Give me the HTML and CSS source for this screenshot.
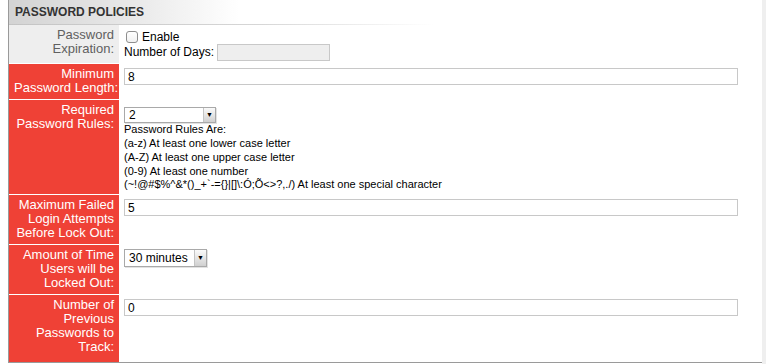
FILE: index.html
```html
<!DOCTYPE html>
<html lang="en">
<head>
    <meta charset="UTF-8">
    <meta name="viewport" content="width=device-width, initial-scale=1.0">
    <title>Password Policies</title>
    <link rel="stylesheet" href="styles.css">
</head>
<body>
    <div class="page">
        <div class="panel">
            <h2 class="panel-title">PASSWORD POLICIES</h2>
            <table class="policies">
                <tr class="optional">
                    <th>Password<br>Expiration:</th>
                    <td>
                        <label class="check"><input type="checkbox"> Enable</label>
                        <div class="days">Number of Days: <input type="text" class="short" disabled></div>
                    </td>
                </tr>
                <tr>
                    <th>Minimum<br>Password Length:</th>
                    <td><input type="text" class="wide" value="8"></td>
                </tr>
                <tr>
                    <th>Required<br>Password Rules:</th>
                    <td>
                        <span class="select rules-count">
                            <select>
                                <option>1</option>
                                <option selected>2</option>
                                <option>3</option>
                                <option>4</option>
                            </select>
                        </span>
                        <div class="rules">
                            Password Rules Are:<br>
                            (a-z) At least one lower case letter<br>
                            (A-Z) At least one upper case letter<br>
                            (0-9) At least one number<br>
                            (~!@#$%^&amp;*()_+`-={}|[]\:Ó;Õ&lt;&gt;?,./) At least one special character
                        </div>
                    </td>
                </tr>
                <tr>
                    <th>Maximum Failed<br>Login Attempts<br>Before Lock Out:</th>
                    <td><input type="text" class="wide" value="5"></td>
                </tr>
                <tr>
                    <th>Amount of Time<br>Users will be<br>Locked Out:</th>
                    <td>
                        <span class="select lock-time">
                            <select>
                                <option>15 minutes</option>
                                <option selected>30 minutes</option>
                                <option>60 minutes</option>
                            </select>
                        </span>
                    </td>
                </tr>
                <tr class="last">
                    <th>Number of<br>Previous<br>Passwords to<br>Track:</th>
                    <td><input type="text" class="wide" value="0"></td>
                </tr>
            </table>
        </div>
        <div class="gutter"></div>
    </div>
</body>
</html>
```

FILE: styles.css
```css
/* Password policy settings */
body { margin: 0; font-family: "Liberation Sans", Arial, sans-serif; color: #000; background: #fff; }
.page { display: flex; height: 364px; }
.panel { margin-left: 8px; width: 753px; border-left: 1px solid #9a9a9a; border-bottom: 1px solid #9a9a9a; align-self: flex-start; }
.gutter { flex: 1; background: #efefef; }

.panel-title {
    margin: 0; height: 24px; line-height: 24px; padding-left: 6px;
    font-size: 12px; font-weight: bold; color: #333;
    background: linear-gradient(to right, #d3d3d3 0, #e8e8e8 120px, #fff 230px);
    border-bottom: 1px solid transparent;
    border-image: linear-gradient(to right, #c4c4c4 0, #d6d6d6 250px, #fff 425px) 1;
}

.policies { width: 100%; table-layout: fixed; border-collapse: separate; border-spacing: 0; }
.policies th {
    width: 100px; padding: 3px 5px 4px; vertical-align: top; text-align: right; white-space: nowrap;
    font-size: 13px; font-weight: normal; line-height: 14px;
    color: #fff; background: #ef4136; border-bottom: 1px solid #fff;
}
.policies td { padding: 4px 5px 3px; vertical-align: top; font-size: 12px; }
.policies .optional th { color: #606060; background: #eee; }
.policies .last th { padding-bottom: 8px; border-bottom: 0; }

input[type="text"] {
    box-sizing: border-box; height: 17px; padding: 0 3px; margin: 0;
    border: 1px solid #c8c8c8; font: 12px "Liberation Sans", Arial, sans-serif; color: #000;
}
input.wide { width: 614px; }
input.short { width: 113px; height: 17px; background: #eee; vertical-align: middle; }

.check { display: flex; align-items: center; height: 15px; }
.check input {
    appearance: none; -webkit-appearance: none; width: 12px; height: 12px; margin: 0 4px 0 2px;
    border: 1px solid #8e8e8e; border-radius: 3px; background: linear-gradient(#fff, #f1f1f1);
}
.days { line-height: 17px; }

.select { position: relative; display: inline-block; }
.select select {
    appearance: none; -webkit-appearance: none; box-sizing: border-box; display: block; margin: 0;
    padding: 0 0 0 4px; border: 1px solid #a9a9a9; border-radius: 0; background: #fff;
    font: 12px "Liberation Sans", Arial, sans-serif; color: #000;
    box-shadow: 1px 1px 0 #e2e2e2;
}
.select::after {
    content: "\25BC"; position: absolute; top: 1px; right: 1px; bottom: 1px; width: 11px;
    border-left: 1px solid #c4c4c4; background: linear-gradient(#fafafa, #d0d0d0);
    font-size: 7px; line-height: 14px; text-align: center; color: #000;
}
.rules-count { margin-top: 3px; }
.rules-count select { width: 92px; height: 16px; line-height: 14px; }
.lock-time select { width: 83px; height: 18px; line-height: 16px; }
.lock-time::after { line-height: 16px; }

.rules { font-size: 11px; line-height: 13.75px; }
```
